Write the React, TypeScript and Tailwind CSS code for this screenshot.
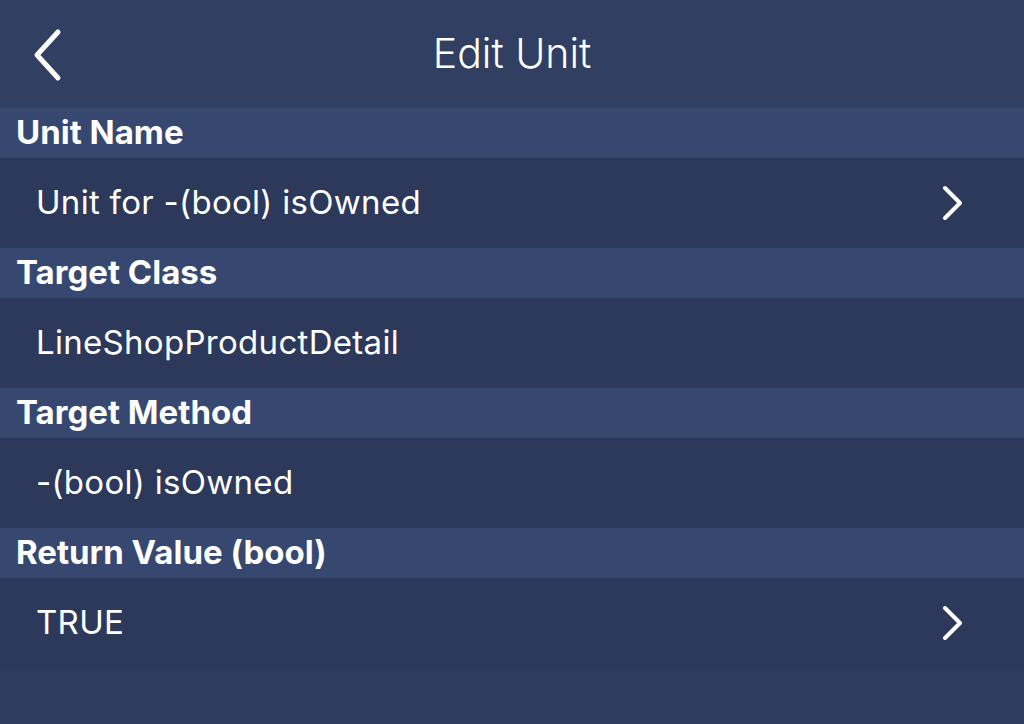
const sections = [
  { title: 'Unit Name', value: 'Unit for -(bool) isOwned', chevron: true },
  { title: 'Target Class', value: 'LineShopProductDetail', chevron: false },
  { title: 'Target Method', value: '-(bool) isOwned', chevron: false },
  { title: 'Return Value (bool)', value: 'TRUE', chevron: true },
];

function Chevron({ dir }: { dir: 'left' | 'right' }) {
  if (dir === 'left') {
    return (
      <svg width="32" height="54" viewBox="0 0 32 54" fill="none">
        <path d="M27 4 L6 27 L27 50" stroke="white" strokeWidth="5" strokeLinecap="round" strokeLinejoin="round" />
      </svg>
    );
  }
  return (
    <svg width="26" height="38" viewBox="0 0 26 38" fill="none">
      <path d="M5 4 L20 19 L5 34" stroke="white" strokeWidth="4" strokeLinecap="round" strokeLinejoin="round" />
    </svg>
  );
}

export default function App() {
  return (
    <div className="w-[1024px] h-[724px] flex flex-col bg-[#2f3c5f] text-white font-['Inter','Liberation_Sans',sans-serif] overflow-hidden">
      <header className="h-[108px] shrink-0 bg-[#313f62] flex items-center relative">
        <div className="pl-[31px] pt-[2px]">
          <Chevron dir="left" />
        </div>
        <h1 className="absolute left-0 right-0 text-center text-[41px] font-light">Edit Unit</h1>
      </header>
      {sections.map((s) => (
        <div key={s.title}>
          <div className="h-[50px] bg-[#374870] flex items-center pl-[16px] text-[33px] font-bold">{s.title}</div>
          <div className="h-[90px] bg-[#2c395b] flex items-center justify-between pl-[36px] pr-[58px] text-[33px] tracking-[0.3px]">
            <span>{s.value}</span>
            {s.chevron && <Chevron dir="right" />}
          </div>
        </div>
      ))}
      <div className="flex-1" />
    </div>
  );
}
